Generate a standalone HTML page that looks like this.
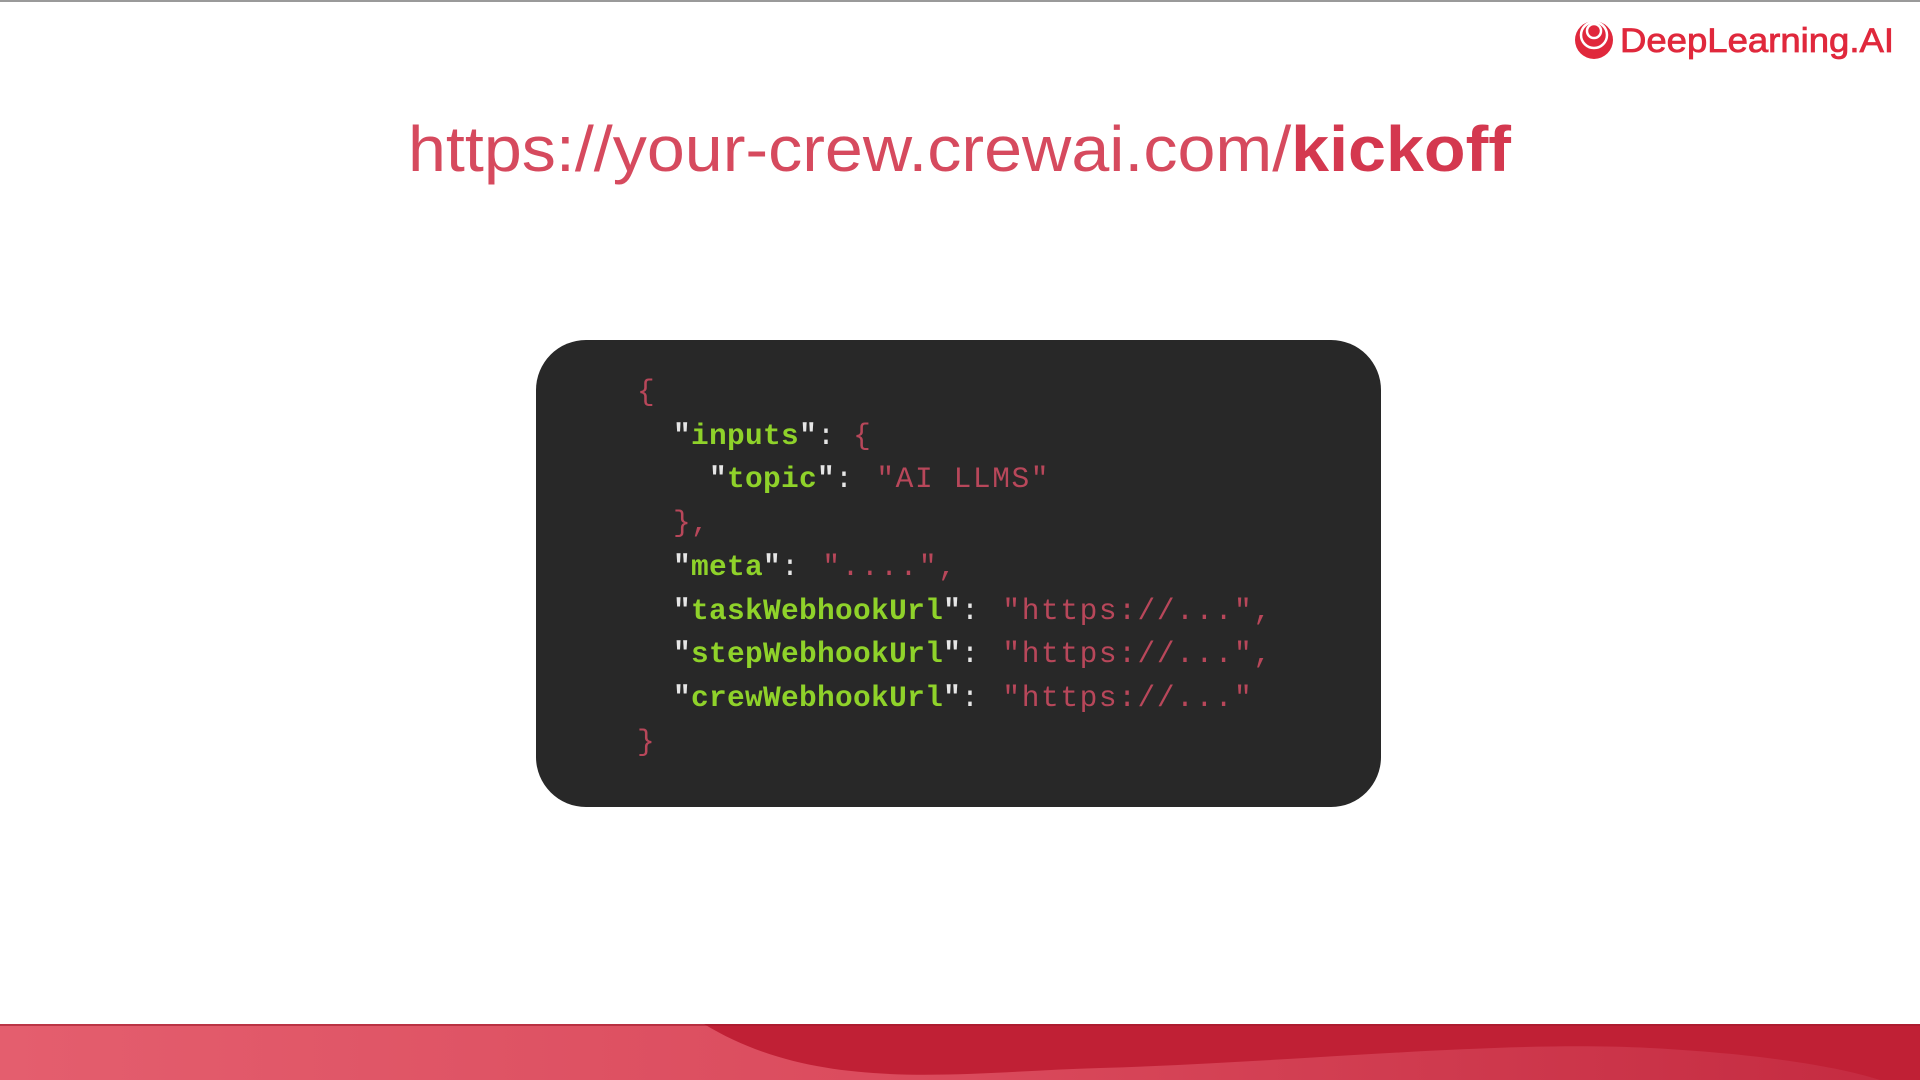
<!DOCTYPE html>
<html><head><meta charset="utf-8"><style>
html,body{margin:0;padding:0;width:1920px;height:1080px;overflow:hidden;background:#fff;position:relative;font-family:"Liberation Sans",sans-serif}
.top{position:absolute;left:0;top:0;width:1920px;height:2px;background:#9a9a9a}
.box{position:absolute;left:536px;top:340px;width:845px;height:467px;background:#282828;border-radius:50px}
pre{position:absolute;left:637px;top:371px;margin:0;font-family:"Liberation Mono",monospace;font-size:29.5px;line-height:43.7px;color:#b8475a;letter-spacing:0.3px}
.k{color:#8fd22a;font-weight:bold}
.w{color:#e6e6e6}
.v{letter-spacing:1.6px;margin-left:4px}
</style></head><body>
<div class="top"></div>
<svg style="position:absolute;left:0;top:0" width="1920" height="1080">
<text x="408" y="171" textLength="1103" lengthAdjust="spacingAndGlyphs" font-family="Liberation Sans, sans-serif" font-size="64" fill="#d64a5e">https://your-crew.crewai.com/<tspan font-weight="bold" fill="#d4384f">kickoff</tspan></text>
<circle cx="1594" cy="40" r="19" fill="#e0283c"/>
<circle cx="1594" cy="35" r="13" fill="none" stroke="#fff" stroke-width="2.5"/>
<circle cx="1594" cy="31" r="7" fill="none" stroke="#fff" stroke-width="2.5"/>
<text x="1620" y="52" textLength="274" lengthAdjust="spacingAndGlyphs" font-family="Liberation Sans, sans-serif" font-size="34" fill="#e0283c" stroke="#e0283c" stroke-width="0.8">DeepLearning.AI</text>
<defs><linearGradient id="g" x1="0" x2="1"><stop offset="0" stop-color="#e45e6e"/><stop offset="0.5" stop-color="#da4a5c"/><stop offset="1" stop-color="#c42a40"/></linearGradient></defs>
<rect x="0" y="1024" width="1920" height="56" fill="url(#g)"/>
<path d="M704 1024 C820 1095 960 1072 1100 1068 C1300 1062 1500 1040 1650 1048 C1780 1055 1850 1070 1880 1080 L1920 1080 L1920 1024 Z" fill="#c02035"/>
<rect x="0" y="1024" width="1920" height="2" fill="#a01a2c" opacity="0.6"/>
</svg>
<div class="box"></div>
<pre>{
  <span class="k"><span class="w">"</span>inputs<span class="w">"</span></span><span class="w">:</span> {
    <span class="k"><span class="w">"</span>topic<span class="w">"</span></span><span class="w">:</span><span class="v"> "AI LLMS"</span>
  },
  <span class="k"><span class="w">"</span>meta<span class="w">"</span></span><span class="w">:</span><span class="v"> "....",</span>
  <span class="k"><span class="w">"</span>taskWebhookUrl<span class="w">"</span></span><span class="w">:</span><span class="v"> "https://...",</span>
  <span class="k"><span class="w">"</span>stepWebhookUrl<span class="w">"</span></span><span class="w">:</span><span class="v"> "https://...",</span>
  <span class="k"><span class="w">"</span>crewWebhookUrl<span class="w">"</span></span><span class="w">:</span><span class="v"> "https://..."</span>
}</pre>
</body></html>
